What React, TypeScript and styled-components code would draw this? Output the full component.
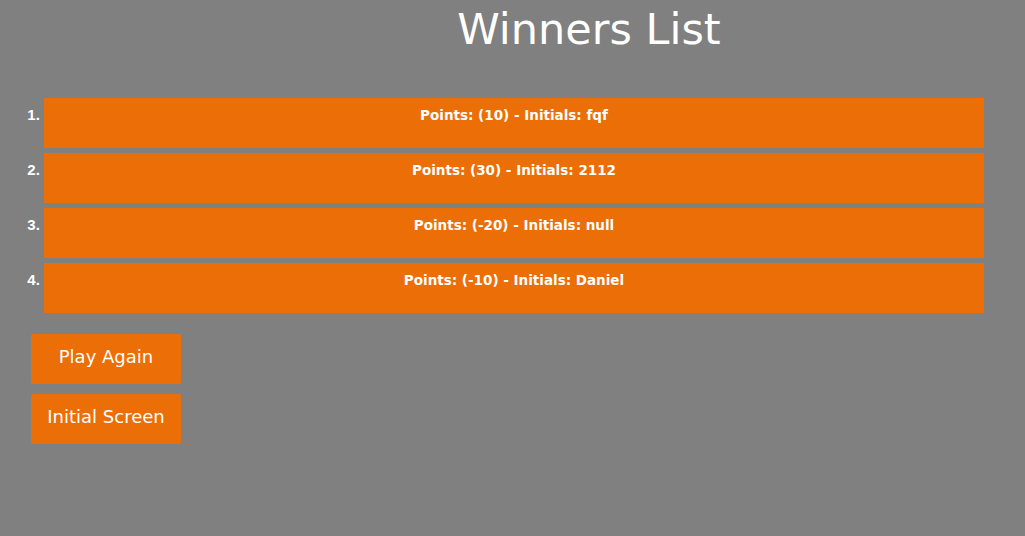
import React from "react";
import styled, { createGlobalStyle } from "styled-components";

const Global = createGlobalStyle`
  html, body { margin: 0; padding: 0; background: #808080; }
  body { font-family: "Comic Sans MS", "DejaVu Sans", sans-serif; }
`;

const Page = styled.div`
  width: 1025px;
  height: 536px;
  background: #808080;
  display: flex;
  flex-direction: column;
  overflow: hidden;
`;

const Title = styled.h1`
  margin: 0;
  padding: 4px 0 0 153px;
  text-align: center;
  font-family: "Comic Sans MS", "DejaVu Sans", sans-serif;
  font-weight: 400;
  font-size: 43px;
  line-height: 50px;
  color: #ffffff;
`;

const List = styled.ol`
  margin: 44px 0 0 0;
  padding: 0 41px 0 44px;
  display: flex;
  flex-direction: column;
  gap: 5px;
  font-family: "Liberation Sans", Arial, sans-serif;
  font-weight: 700;
  font-size: 15px;
  color: #ffffff;
`;

const Item = styled.li`
  height: 50px;
  padding-left: 0;
  &::marker {
    color: #ffffff;
  }
`;

const ItemBox = styled.div`
  height: 50px;
  background: #ec6e06;
  color: #ffffff;
  text-align: center;
  font-family: "Comic Sans MS", "DejaVu Sans", sans-serif;
  font-weight: 700;
  font-size: 13.5px;
  line-height: 18px;
  padding-top: 8px;
  box-sizing: border-box;
`;

const Buttons = styled.div`
  display: flex;
  flex-direction: column;
  align-items: flex-start;
  gap: 10px;
  margin: 21px 0 0 31px;
`;

const Button = styled.button`
  width: 150px;
  height: 50px;
  border: none;
  border-radius: 2px;
  background: #ec6e06;
  color: #ffffff;
  font-family: "Comic Sans MS", "DejaVu Sans", sans-serif;
  font-size: 18px;
  padding: 0 0 5px 0;
  cursor: pointer;
`;

const winners = [
  { points: 10, initials: "fqf" },
  { points: 30, initials: "2112" },
  { points: -20, initials: "null" },
  { points: -10, initials: "Daniel" },
];

export default function App() {
  return (
    <Page>
      <Global />
      <Title>Winners List</Title>
      <List>
        {winners.map((w, i) => (
          <Item key={i}>
            <ItemBox>
              Points: ({w.points}) - Initials: {w.initials}
            </ItemBox>
          </Item>
        ))}
      </List>
      <Buttons>
        <Button>Play Again</Button>
        <Button>Initial Screen</Button>
      </Buttons>
    </Page>
  );
}
